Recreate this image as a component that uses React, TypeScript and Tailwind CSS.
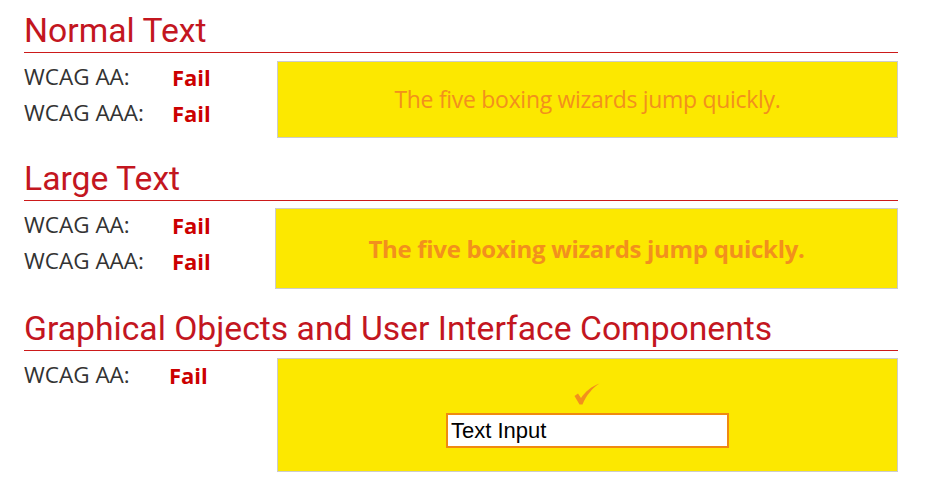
import React from "react";

const heading = "font-['Roboto',sans-serif] text-[33.7px] leading-[40px] text-[#c3161f] border-b border-[#cc1a1a] pb-[1px]";
const label = "font-['Open_Sans',sans-serif] text-[22.5px] leading-[32px] text-[#333333]";
const fail = "font-['Open_Sans',sans-serif] font-bold text-[22px] leading-[32px] text-[#cc0000]";

function Row({ name, w }: { name: string; w: string }) {
  return (
    <div className="flex">
      <div className={`${label} ${w}`}>{name}</div>
      <div className={fail}>Fail</div>
    </div>
  );
}

export default function App() {
  return (
    <div className="bg-white w-[939px] h-[480px] pl-[24px] pr-[41px] pt-[11px] overflow-hidden">
      <section>
        <h2 className={heading}>Normal Text</h2>
        <div className="flex mt-[8px]">
          <div className="w-[253px] flex flex-col gap-[4px]">
            <Row name="WCAG AA:" w="w-[148px]" />
            <Row name="WCAG AAA:" w="w-[148px]" />
          </div>
          <div className="flex-1 h-[77px] bg-[#fce800] border border-[#cccccc] flex items-center justify-center">
            <span className="font-['Open_Sans',sans-serif] text-[23px] text-[#f2901d] tracking-[-0.3px]">
              The five boxing wizards jump quickly.
            </span>
          </div>
        </div>
      </section>

      <section className="mt-[21px]">
        <h2 className={heading}>Large Text</h2>
        <div className="flex mt-[7px]">
          <div className="w-[251px] pt-[1px] flex flex-col gap-[4px]">
            <Row name="WCAG AA:" w="w-[148px]" />
            <Row name="WCAG AAA:" w="w-[148px]" />
          </div>
          <div className="flex-1 h-[81px] bg-[#fce800] border border-[#cccccc] flex items-center justify-center">
            <span className="font-['Open_Sans',sans-serif] font-bold text-[24px] text-[#f2901d] tracking-[-0.3px]">
              The five boxing wizards jump quickly.
            </span>
          </div>
        </div>
      </section>

      <section className="mt-[20px]">
        <h2 className={heading}>Graphical Objects and User Interface Components</h2>
        <div className="flex mt-[7px]">
          <div className="w-[253px] pt-[1px]">
            <Row name="WCAG AA:" w="w-[145px]" />
          </div>
          <div className="flex-1 h-[114px] bg-[#fce800] border border-[#cccccc] flex flex-col items-center pt-[24px]">
            <svg width="26" height="22" viewBox="0 0 26 22" className="ml-[-2px]">
              <path
                d="M0.5 13 L4 10.5 L7 15 C11 9 17 3.5 25.5 0.5 C18.5 5 12.5 12 8.5 21.5 L5.5 21.5 Z"
                fill="#f2901d"
              />
            </svg>
            <div className="mt-[8px] w-[283px] h-[35px] bg-white border-2 border-[#f08a10] flex items-center px-[3px] font-['Liberation_Sans',Arial,sans-serif] text-[22px] text-black">
              Text Input
            </div>
          </div>
        </div>
      </section>
    </div>
  );
}
